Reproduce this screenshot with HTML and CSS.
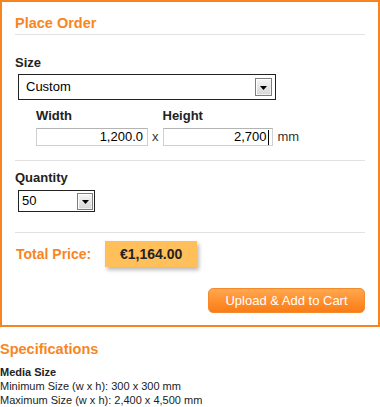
FILE: index.html
```html
<!DOCTYPE html>
<html>
<head>
<meta charset="utf-8">
<link rel="stylesheet" href="styles.css">
</head>
<body>
<div class="order">
  <h2 class="order-title">Place Order</h2>

  <div class="section section-size">
    <div class="label">Size</div>
    <div class="select select-size">
      <span class="select-value">Custom</span>
      <span class="select-btn select-btn-lg">
        <svg width="7" height="4" viewBox="0 0 7 4"><polygon points="0,0 7,0 3.5,4" fill="#000"/></svg>
      </span>
    </div>
    <div class="dims">
      <div class="dim">
        <div class="label">Width</div>
        <div class="textbox textbox-width"><span>1,200.0</span></div>
      </div>
      <span class="times">x</span>
      <div class="dim">
        <div class="label">Height</div>
        <div class="textbox textbox-height"><span>2,700</span><span class="caret"></span></div>
      </div>
      <span class="unit">mm</span>
    </div>
  </div>

  <div class="section section-qty">
    <div class="label">Quantity</div>
    <div class="select select-qty">
      <span class="select-value">50</span>
      <span class="select-btn select-btn-sm">
        <svg width="7" height="4" viewBox="0 0 7 4"><polygon points="0,0 7,0 3.5,4" fill="#000"/></svg>
      </span>
    </div>
  </div>

  <div class="total">
    <span class="total-label">Total Price:</span>
    <span class="total-value">€1,164.00</span>
  </div>

  <div class="actions">
    <button class="cart-btn">Upload &amp; Add to Cart</button>
  </div>
</div>

<div class="specs">
  <h3 class="specs-title">Specifications</h3>
  <div class="specs-head">Media Size</div>
  <div class="specs-line">Minimum Size (w x h): 300 x 300 mm</div>
  <div class="specs-line">Maximum Size (w x h): 2,400 x 4,500 mm</div>
</div>
</body>
</html>
```

FILE: styles.css
```css
html, body {
  margin: 0;
  padding: 0;
  background: #fff;
}

body {
  font-family: "Liberation Sans", Arial, sans-serif;
  color: #222;
  width: 380px;
}

.order {
  box-sizing: border-box;
  width: 380px;
  border: 2px solid #f7841f;
  padding: 12px 13px 12px 13px;
}

.order-title {
  margin: 0;
  font-size: 14.5px;
  line-height: 18px;
  font-weight: bold;
  color: #f7861f;
  padding-bottom: 2px;
  border-bottom: 1px solid #e2e2e2;
}

.section {
  border-bottom: 1px solid #e2e2e2;
}

.section-size {
  padding-top: 20px;
  padding-bottom: 14px;
}

.section-qty {
  padding-top: 9px;
  padding-bottom: 20px;
}

.label {
  font-size: 13px;
  line-height: 16px;
  font-weight: bold;
  color: #222;
}

.select {
  box-sizing: border-box;
  display: flex;
  align-items: center;
  justify-content: space-between;
  background: #fff;
  border: 1px solid #222;
  margin-left: 3px;
}

.select-size {
  width: 258px;
  height: 26px;
  margin-top: 3px;
  padding: 0 3px 0 7px;
}

.select-qty {
  width: 77px;
  height: 22px;
  margin-top: 4px;
  padding: 0 1px 0 3px;
}

.select-value {
  font-size: 13px;
  line-height: 16px;
  color: #000;
}

.select-btn {
  box-sizing: border-box;
  display: flex;
  align-items: center;
  justify-content: center;
  border: 1px solid #7d7d7d;
  box-shadow: inset 1px 1px 0 #fff, inset -1px -1px 0 #f0f0f0;
  background: linear-gradient(#f6f6f6, #d6d6d6);
}

.select-btn svg {
  display: block;
  margin-top: 1px;
}

.select-btn-lg {
  width: 17px;
  height: 18px;
}

.select-btn-sm {
  width: 16px;
  height: 17px;
}

.dims {
  display: flex;
  align-items: flex-end;
  margin-top: 8px;
  padding-left: 21px;
}

.dim .label {
  margin-bottom: 4px;
}

.textbox {
  box-sizing: border-box;
  display: flex;
  align-items: center;
  justify-content: flex-end;
  height: 18px;
  border: 1px solid #d0d0d0;
  border-top-color: #b4b4b4;
  background: #fff;
  font-size: 13px;
  line-height: 16px;
  color: #000;
  padding-right: 4px;
}

.textbox-width {
  width: 112px;
}

.textbox-height {
  width: 110px;
  padding-right: 3px;
}

.caret {
  display: block;
  width: 1px;
  height: 15px;
  background: #000;
  margin-left: 1px;
}

.times,
.unit {
  font-size: 13px;
  line-height: 18px;
  color: #333;
}

.times {
  margin: 0 4px;
}

.unit {
  margin-left: 5px;
}

.total {
  display: flex;
  align-items: center;
  margin-top: 8px;
  height: 26px;
}

.total-label {
  font-size: 14px;
  font-weight: bold;
  color: #f7861f;
  margin-right: 14px;
  margin-left: 1px;
}

.total-value {
  box-sizing: border-box;
  height: 26px;
  width: 92px;
  display: flex;
  align-items: center;
  justify-content: center;
  background: #ffbf5a;
  box-shadow: 2px 3px 4px rgba(0, 0, 0, 0.28);
  font-size: 14px;
  font-weight: bold;
  color: #222;
}

.actions {
  display: flex;
  justify-content: flex-end;
  margin-top: 21px;
}

.cart-btn {
  box-sizing: border-box;
  width: 157px;
  height: 25px;
  border: 1px solid #f38a2c;
  border-radius: 5px;
  background: linear-gradient(#ffa850, #ff8e2c 55%, #f97d18);
  color: #fff;
  font-family: "Liberation Sans", Arial, sans-serif;
  font-size: 13px;
  line-height: 16px;
  padding: 0;
  margin: 0;
}

.specs {
  padding-top: 13px;
}

.specs-title {
  margin: 0;
  font-size: 14.5px;
  line-height: 18px;
  font-weight: bold;
  color: #f7861f;
}

.specs-head {
  margin-top: 7px;
  font-size: 11px;
  line-height: 14px;
  font-weight: bold;
  color: #222;
}

.specs-line {
  font-size: 11px;
  line-height: 14px;
  color: #222;
}
```
